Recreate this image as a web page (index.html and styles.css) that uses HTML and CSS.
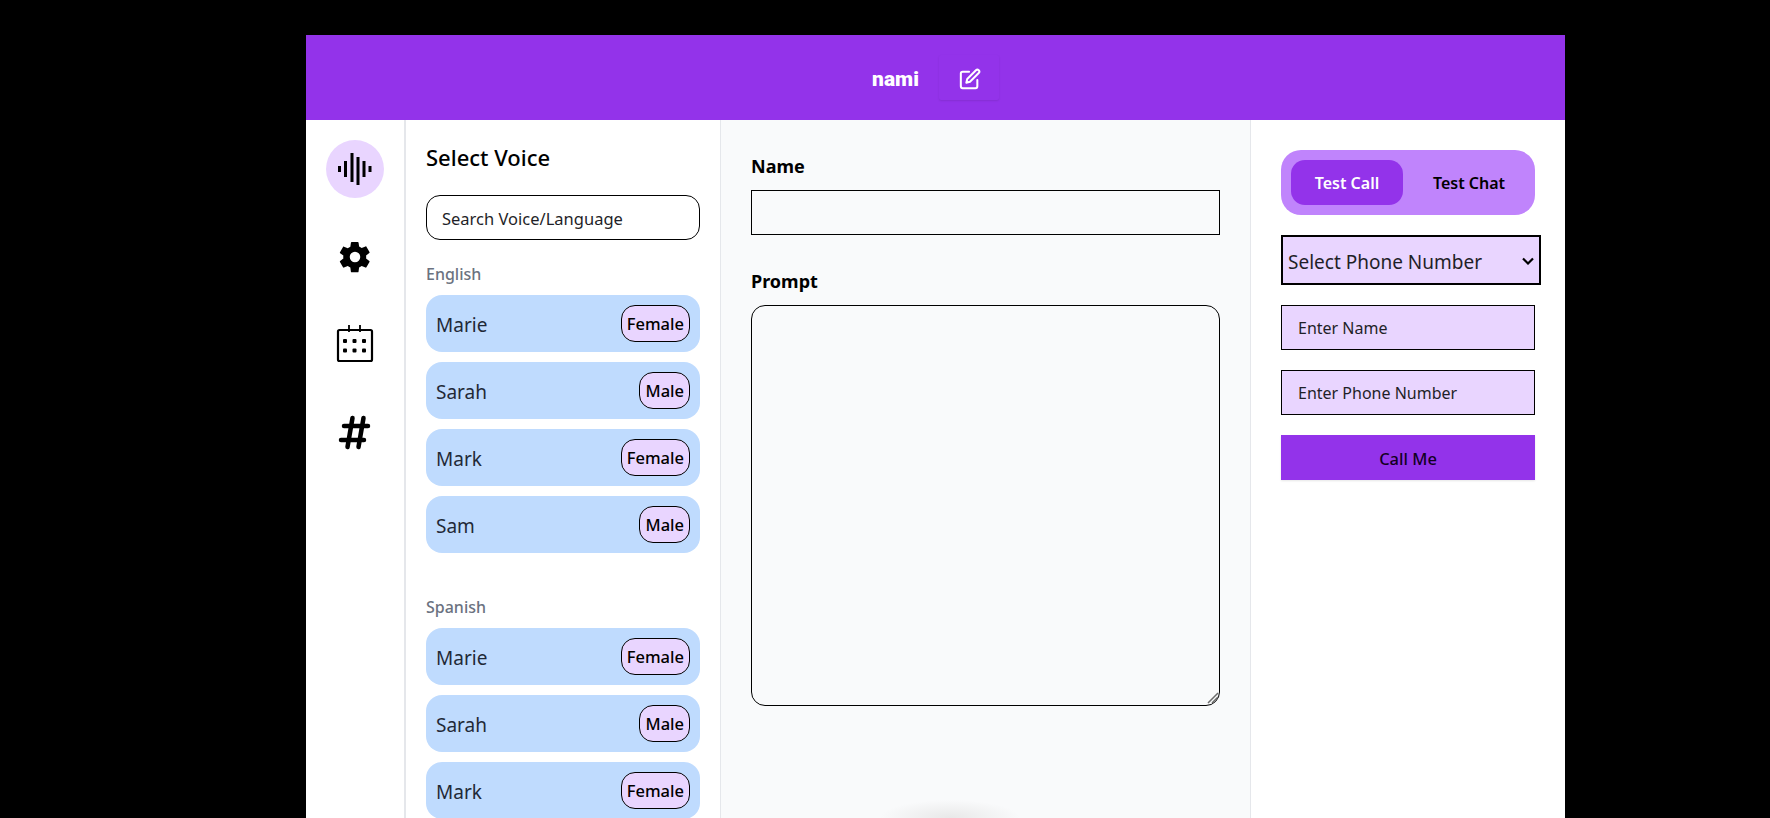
FILE: index.html
```html
<!DOCTYPE html>
<html>
  <head>
    <title>nami</title>
    <meta name="viewport" content="width=device-width, initial-scale=1.0" />
    <link rel="stylesheet" href="styles.css">
  </head>
  <body>
    <div class="app">
      <header class="topbar">
        <span class="agent-name">nami</span>
        <button class="edit-btn" type="button">
          <svg width="22" height="22" viewBox="0 0 24 24" fill="none" stroke="#fff" stroke-width="2.200" stroke-linecap="round" stroke-linejoin="round">
            <path d="M11 4H4a2 2 0 0 0-2 2v14a2 2 0 0 0 2 2h14a2 2 0 0 0 2-2v-7" />
            <path d="M18.500 2.500a2.120 2.120 0 0 1 3 3L12 15l-4 1 1-4 9.500-9.500z" />
          </svg>
        </button>
      </header>

      <div class="columns">
        <nav class="rail">
          <a class="rail-item active">
            <svg width="36" height="36" viewBox="0 0 36 36" stroke="#000" stroke-width="3" fill="none">
              <path d="M2.500 15v6M8.500 10v16M15 2v29M21 6v28M27 10v16M33 15v6" />
            </svg>
          </a>
          <a class="rail-item">
            <svg width="36" height="36" viewBox="0 0 24 24" fill="#000">
              <path d="M19.400 13c.04-.33.06-.66.06-1s-.02-.67-.07-1l2.150-1.680c.19-.15.25-.43.12-.65l-2.040-3.530c-.12-.22-.39-.31-.62-.22l-2.540 1.020c-.53-.4-1.090-.74-1.720-1L14.360 2.300A.5.500 0 0 0 13.860 2H9.780c-.25 0-.46.18-.5.420L8.900 5.120c-.62.26-1.190.6-1.720 1L4.640 5.100c-.23-.09-.49 0-.62.22L1.980 8.850c-.13.220-.07.500.12.650L4.250 11c-.05.33-.08.67-.08 1s.03.67.07 1l-2.150 1.680c-.19.150-.25.430-.12.650l2.040 3.530c.12.220.39.310.62.220l2.540-1.020c.53.400 1.090.740 1.720 1l.38 2.700c.04.240.25.420.5.420h4.080c.25 0 .46-.18.5-.42l.38-2.700c.62-.26 1.190-.6 1.720-1l2.540 1.020c.23.090.49 0 .62-.22l2.040-3.530c.13-.22.070-.5-.12-.65L19.400 13zM12 15.500a3.500 3.500 0 1 1 0-7 3.500 3.500 0 0 1 0 7z" />
            </svg>
          </a>
          <a class="rail-item">
            <svg width="40" height="40" viewBox="0 0 40 40" fill="#000">
              <rect x="3" y="5" width="34" height="31" rx="1.500" fill="none" stroke="#000" stroke-width="2.200" />
              <path d="M14 0v7M25 0v7" fill="none" stroke="#000" stroke-width="1.800" />
              <rect x="8" y="14" width="4" height="4" rx="1" /><rect x="17.500" y="14" width="4" height="4" rx="1" /><rect x="27" y="14" width="4" height="4" rx="1" />
              <rect x="8" y="23.500" width="4" height="4" rx="1" /><rect x="17.500" y="23.500" width="4" height="4" rx="1" /><rect x="27" y="23.500" width="4" height="4" rx="1" />
            </svg>
          </a>
          <a class="rail-item">
            <svg width="36" height="36" viewBox="0 0 36 36" fill="none" stroke="#000" stroke-width="4.500" stroke-linecap="round">
              <path d="M7 11h24M4 25h23M15.500 3l-5 29M26.500 3l-5 29" />
            </svg>
          </a>
        </nav>

        <aside class="voices">
          <h2 class="voices-title">Select Voice</h2>
          <input class="voice-search" type="text" placeholder="Search Voice/Language" />

          <h3 class="lang-label">English</h3>
          <ul class="voice-list">
            <li class="voice-card">Marie <span class="gender-tag">Female</span></li>
            <li class="voice-card">Sarah <span class="gender-tag">Male</span></li>
            <li class="voice-card">Mark <span class="gender-tag">Female</span></li>
            <li class="voice-card">Sam <span class="gender-tag">Male</span></li>
          </ul>

          <h3 class="lang-label">Spanish</h3>
          <ul class="voice-list">
            <li class="voice-card">Marie <span class="gender-tag">Female</span></li>
            <li class="voice-card">Sarah <span class="gender-tag">Male</span></li>
            <li class="voice-card">Mark <span class="gender-tag">Female</span></li>
          </ul>
        </aside>

        <main class="editor">
          <label class="field-label" for="agent_name">Name</label>
          <input class="name-input" id="agent_name" type="text" />
          <label class="field-label prompt-label" for="agent_prompt">Prompt</label>
          <textarea class="prompt-input" id="agent_prompt"></textarea>
          <svg class="resize-grip" width="12" height="12" viewBox="0 0 12 12" fill="none" stroke="#6b6b6b" stroke-width="1.500">
            <path d="M1 11L11 1M5 11l6-6" />
          </svg>
          <div class="float-shadow"></div>
        </main>

        <section class="tester">
          <div class="tabs">
            <button class="tab tab-active" type="button">Test Call</button>
            <button class="tab" type="button">Test Chat</button>
          </div>
          <div class="select-wrap">
            <select class="phone-select">
              <option>Select Phone Number</option>
            </select>
            <svg class="select-arrow" width="12" height="8" viewBox="0 0 12 8" fill="none" stroke="#000" stroke-width="2.200">
              <path d="M1 1.500l5 5 5-5" />
            </svg>
          </div>
          <input class="test-input" type="text" placeholder="Enter Name" />
          <input class="test-input" type="text" placeholder="Enter Phone Number" />
          <button class="call-btn" type="button">Call Me</button>
        </section>
      </div>
    </div>
  </body>
</html>
```

FILE: styles.css
```css
* {
  box-sizing: border-box;
}
html,
body {
  height: 100%;
}
body {
  margin: 0;
  padding: 35px 205px 0 306px;
  background: #000;
  overflow: hidden;
  font-family: "Noto Sans", "Open Sans", Arial, sans-serif;
  color: #000;
}
.app {
  height: 100%;
  display: flex;
  flex-direction: column;
  background: #fff;
}

/* top bar */
.topbar {
  height: 85px;
  flex: none;
  display: flex;
  align-items: center;
  justify-content: center;
  gap: 20px;
  background: #9333ea;
}
.agent-name {
  padding-top: 2px;
  font-family: Roboto, Arial, sans-serif;
  font-size: 21px;
  font-weight: 900;
  color: #fff;
}
.edit-btn {
  width: 60px;
  height: 45px;
  display: flex;
  align-items: center;
  justify-content: center;
  padding: 2px 0 0 2px;
  border: none;
  border-radius: 2px;
  background: #9333ea;
  box-shadow: 0 1px 2px rgba(0, 0, 0, 0.1);
}

.columns {
  flex: 1;
  min-height: 0;
  display: flex;
  overflow: hidden;
}

/* icon rail */
.rail {
  width: 100px;
  flex: none;
  display: flex;
  flex-direction: column;
  align-items: center;
  gap: 30px;
  padding-top: 20px;
  border-right: 2px solid #e5e7eb;
}
.rail-item {
  width: 58px;
  height: 58px;
  display: flex;
  align-items: center;
  justify-content: center;
  border-radius: 50%;
}
.rail-item.active {
  background: #e9d5ff;
}

/* voices */
.voices {
  width: 315px;
  flex: none;
  padding: 22px 20px 0;
  overflow: hidden;
  border-right: 1px solid #e5e7eb;
}
.voices-title {
  margin: 0;
  font-size: 22px;
  line-height: 30px;
  font-weight: 500;
}
.voice-search {
  display: block;
  width: 100%;
  height: 45px;
  margin-top: 23px;
  padding: 1px 15px 0;
  border: 1px solid #000;
  border-radius: 14px;
  font: inherit;
  font-size: 16.500px;
  background: #fff;
}
.voice-search::placeholder,
.test-input::placeholder {
  color: #1f1f28;
  opacity: 1;
}
.lang-label {
  margin: 22px 0 9px;
  font-size: 16px;
  line-height: 24px;
  font-weight: 500;
  color: #6b7280;
}
.voice-list {
  list-style: none;
  margin: 0 0 42px;
  padding: 0;
  display: flex;
  flex-direction: column;
  gap: 10px;
}
.voice-list:last-child {
  margin-bottom: 0;
}
.voice-card {
  height: 57px;
  display: flex;
  align-items: center;
  justify-content: space-between;
  padding: 2px 10px 0;
  border-radius: 16px;
  background: #bfdbfe;
  font-size: 19px;
  color: #1f2937;
}
.gender-tag {
  height: 37px;
  margin-top: -2px;
  display: flex;
  align-items: center;
  padding: 0 5px;
  border: 1px solid #000;
  border-radius: 14px;
  background: #e9d5ff;
  font-size: 16.500px;
  font-weight: 500;
  color: #000;
}

/* name and prompt */
.editor {
  position: relative;
  width: 530px;
  flex: none;
  padding: 31px 30px 0;
  background: #f9fafb;
  border-right: 1px solid #e5e7eb;
}
.field-label {
  display: block;
  font-size: 18px;
  line-height: 30px;
  font-weight: 700;
}
.name-input {
  display: block;
  width: 100%;
  height: 45px;
  margin-top: 9px;
  border: 1px solid #000;
  background: #f9fafb;
}
.prompt-label {
  margin-top: 31px;
}
.prompt-input {
  display: block;
  width: 100%;
  height: 401px;
  margin-top: 9px;
  border: 1px solid #000;
  border-radius: 14px;
  background: #f9fafb;
  resize: none;
}
.resize-grip {
  position: absolute;
  left: 486px;
  top: 572px;
}
.float-shadow {
  position: absolute;
  left: 149px;
  bottom: 0;
  width: 160px;
  height: 20px;
  background: radial-gradient(ellipse 70px 18px at 50% 100%, #e8e8e8, rgba(232, 232, 232, 0));
}

/* test panel */
.tester {
  flex: 1;
  display: flex;
  flex-direction: column;
  align-items: flex-start;
  padding: 30px 30px 0;
}
.tabs {
  width: 254px;
  height: 65px;
  display: flex;
  align-items: center;
  padding: 0 10px;
  border-radius: 20px;
  background: #c084fc;
}
.tab {
  width: 112px;
  height: 45px;
  padding: 1px 0 0;
  border: none;
  border-radius: 14px;
  background: none;
  font: inherit;
  font-size: 16px;
  font-weight: 600;
  color: #000;
}
.tab + .tab {
  margin-left: 10px;
}
.tab-active {
  background: #9333ea;
  color: #fff;
}
.select-wrap {
  position: relative;
  margin-top: 20px;
}
.phone-select {
  display: block;
  width: 260px;
  height: 50px;
  padding: 3px 5px 0;
  border: 2px solid #000;
  border-radius: 0;
  background: #e9d5ff;
  appearance: none;
  font: inherit;
  font-size: 19px;
  color: #1f1f28;
}
.select-arrow {
  position: absolute;
  right: 7px;
  top: 22px;
}
.test-input {
  width: 254px;
  height: 45px;
  margin-top: 20px;
  padding: 1px 16px 0;
  border: 1px solid #000;
  background: #e9d5ff;
  font: inherit;
  font-size: 16px;
}
.call-btn {
  width: 254px;
  height: 45px;
  margin-top: 20px;
  padding: 1px 0 0;
  border: none;
  background: #9333ea;
  box-shadow: 0 1px 2px rgba(0, 0, 0, 0.1);
  font: inherit;
  font-size: 16.500px;
  font-weight: 500;
  color: #12001f;
}
```
